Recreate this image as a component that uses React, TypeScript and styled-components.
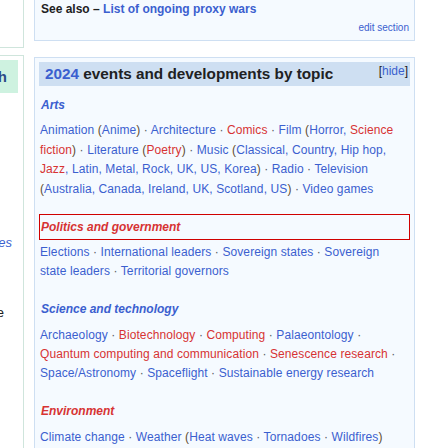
import React from "react";
import styled, { createGlobalStyle } from "styled-components";

const GlobalStyle = createGlobalStyle`
  html, body {
    margin: 0;
    padding: 0;
    background: #ffffff;
    overflow: hidden;
  }
  body {
    font-family: "Liberation Sans", Arial, sans-serif;
    font-stretch: normal;
    color: #202122;
  }
`;

const Page = styled.div`
  display: flex;
  align-items: flex-start;
  gap: 10px;
  width: 448px;
  height: 448px;
  overflow: hidden;
`;

const LeftCol = styled.div`
  width: 24px;
  flex-shrink: 0;
  display: flex;
  flex-direction: column;
`;

const LeftPanelTop = styled.div`
  height: 47px;
  margin-top: -10px;
  border-right: 1px solid #cfe5dc;
  border-bottom: 1px solid #cfe5dc;
  box-sizing: content-box;
  padding-top: 10px;
`;

const LeftPanel = styled.div`
  margin-top: 7px;
  height: 420px;
  border-top: 1px solid #cfe5dc;
  border-right: 1px solid #cfe5dc;
  padding: 4px 5px 0 0;
  display: flex;
  flex-direction: column;
`;

const GreenCell = styled.div`
  height: 33px;
  background: #cef2e0;
  display: flex;
  align-items: center;
  justify-content: flex-end;
  overflow: hidden;
  padding-right: 11px;
  font-size: 15px;
  font-weight: bold;
  color: #2b4a86;
  white-space: nowrap;
`;

const ClipLine = styled.div<{ $top: number; $pad: number; $italic?: boolean; $blue?: boolean }>`
  margin-top: ${(p) => p.$top}px;
  height: 20px;
  line-height: 20px;
  display: flex;
  justify-content: flex-end;
  overflow: hidden;
  white-space: nowrap;
  padding-right: ${(p) => p.$pad}px;
  margin-right: -5px;
  font-size: 13px;
  font-style: ${(p) => (p.$italic ? "italic" : "normal")};
  color: ${(p) => (p.$blue ? "#3b5fcf" : "#202122")};
`;

const Main = styled.div`
  width: 381px;
  flex-shrink: 0;
  display: flex;
  flex-direction: column;
`;

const Box = styled.div`
  background: #f5faff;
  border: 1px solid #cedff2;
`;

const SeeAlsoBox = styled(Box)`
  margin-top: -14px;
  padding: 13px 5px 5px 6px;
`;

const SeeAlsoLine = styled.div`
  font-size: 12px;
  font-weight: bold;
  line-height: 19.4px;
  white-space: nowrap;
`;

const EditLine = styled.div`
  margin-top: 1.6px;
  text-align: right;
  font-size: 10px;
  line-height: 14px;
  color: #3b5fcf;
`;

const TopicBox = styled(Box)`
  margin-top: 16px;
  padding: 4px 4px 0 4px;
  height: 440px;
`;

const HeaderBar = styled.div`
  height: 24px;
  background: #cedff2;
  display: flex;
  justify-content: space-between;
  align-items: flex-start;
  padding: 0 2px 0 6px;
`;

const Title = styled.div`
  font-size: 15.3px;
  font-weight: bold;
  line-height: 24px;
  white-space: nowrap;
  color: #202122;
`;

const HideLink = styled.div`
  margin-top: 1px;
  font-size: 12px;
  line-height: 16px;
  color: #202122;
`;

const Sections = styled.div`
  margin-top: 6px;
  display: flex;
  flex-direction: column;
  gap: 14.5px;
`;

const Section = styled.div`
  display: flex;
  flex-direction: column;
  gap: 3.4px;
`;

const SectionHead = styled.div<{ $red?: boolean; $boxed?: boolean }>`
  height: 26px;
  box-sizing: border-box;
  display: flex;
  align-items: center;
  padding-left: 1px;
  border: 1px solid ${(p) => (p.$boxed ? "#d00000" : "transparent")};
  font-size: 12px;
  font-weight: bold;
  font-style: italic;
  color: ${(p) => (p.$red ? "#d73333" : "#3b5fcf")};
`;

const List = styled.div`
  padding: 0 4px 0 1px;
  font-size: 12px;
  line-height: 19.4px;
  letter-spacing: 0.1px;
  color: #3b5fcf;
`;

const A = styled.span<{ $red?: boolean }>`
  color: ${(p) => (p.$red ? "#d73333" : "#3b5fcf")};
`;

const Paren = styled.span`
  color: #5f4c30;
`;

const Dot = styled.span`
  color: #54595d;
`;

const Sep = () => <Dot>{"\u00a0· "}</Dot>;

export default function App() {
  return (
    <>
      <GlobalStyle />
      <Page>
        <LeftCol>
          <LeftPanelTop />
          <LeftPanel>
            <GreenCell>Search</GreenCell>
            <ClipLine $top={140} $pad={11} $italic $blue>
              More articles
            </ClipLine>
            <ClipLine $top={50} $pad={19}>
              Wikipedia archive
            </ClipLine>
          </LeftPanel>
        </LeftCol>
        <Main>
          <SeeAlsoBox>
            <SeeAlsoLine>
              See also – <A>List of ongoing proxy wars</A>
            </SeeAlsoLine>
            <EditLine>edit section</EditLine>
          </SeeAlsoBox>
          <TopicBox>
            <HeaderBar>
              <Title>
                <A>2024</A> events and developments by topic
              </Title>
              <HideLink>
                [<A>hide</A>]
              </HideLink>
            </HeaderBar>
            <Sections>
              <Section>
                <SectionHead>Arts</SectionHead>
                <List>
                  <A>Animation</A> <Paren>(</Paren>
                  <A>Anime</A>
                  <Paren>)</Paren>
                  <Sep />
                  <A>Architecture</A>
                  <Sep />
                  <A $red>Comics</A>
                  <Sep />
                  <A>Film</A> <Paren>(</Paren>
                  <A>Horror</A>, <A $red>Science fiction</A>
                  <Paren>)</Paren>
                  <Sep />
                  <A>Literature</A> <Paren>(</Paren>
                  <A $red>Poetry</A>
                  <Paren>)</Paren>
                  <Sep />
                  <A>Music</A> <Paren>(</Paren>
                  <A>Classical</A>, <A>Country</A>, <A>Hip hop</A>, <A $red>Jazz</A>, <A>Latin</A>,{" "}
                  <A>Metal</A>, <A>Rock</A>, <A>UK</A>, <A>US</A>, <A>Korea</A>
                  <Paren>)</Paren>
                  <Sep />
                  <A>Radio</A>
                  <Sep />
                  <A>Television</A> <Paren>(</Paren>
                  <A>Australia</A>, <A>Canada</A>, <A>Ireland</A>, <A>UK</A>, <A>Scotland</A>, <A>US</A>
                  <Paren>)</Paren>
                  <Sep />
                  <A>Video games</A>
                </List>
              </Section>
              <Section>
                <SectionHead $red $boxed>
                  Politics and government
                </SectionHead>
                <List>
                  <A>Elections</A>
                  <Sep />
                  <A>International leaders</A>
                  <Sep />
                  <A>Sovereign states</A>
                  <Sep />
                  <A>Sovereign state leaders</A>
                  <Sep />
                  <A>Territorial governors</A>
                </List>
              </Section>
              <Section>
                <SectionHead>Science and technology</SectionHead>
                <List>
                  <A>Archaeology</A>
                  <Sep />
                  <A $red>Biotechnology</A>
                  <Sep />
                  <A $red>Computing</A>
                  <Sep />
                  <A>Palaeontology</A>
                  <Sep />
                  <A $red>Quantum computing and communication</A>
                  <Sep />
                  <A $red>Senescence research</A>
                  <Sep />
                  <A>Space/Astronomy</A>
                  <Sep />
                  <A>Spaceflight</A>
                  <Sep />
                  <A>Sustainable energy research</A>
                </List>
              </Section>
              <Section>
                <SectionHead $red>Environment</SectionHead>
                <List>
                  <A>Climate change</A>
                  <Sep />
                  <A>Weather</A> <Paren>(</Paren>
                  <A>Heat waves</A>
                  <Sep />
                  <A>Tornadoes</A>
                  <Sep />
                  <A>Wildfires</A>
                  <Paren>)</Paren>
                </List>
              </Section>
            </Sections>
          </TopicBox>
        </Main>
      </Page>
    </>
  );
}
